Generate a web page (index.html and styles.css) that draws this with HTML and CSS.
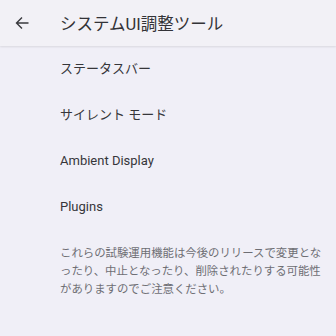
FILE: index.html
```html
<!DOCTYPE html>
<html lang="ja">
<head>
    <meta charset="UTF-8">
    <meta name="viewport" content="width=device-width, initial-scale=1.0">
    <title>システムUI調整ツール</title>
    <link rel="stylesheet" href="styles.css">
</head>
<body>

<div class="app-bar">
    <span class="back">
        <svg width="14" height="14" viewBox="0 0 14 14">
            <path d="M13.5 7H1.5M7 1.5L1.5 7 7 12.5" fill="none" stroke="#3a3a3e" stroke-width="1.4"/>
        </svg>
    </span>
    <h1>システムUI調整ツール</h1>
</div>

<ul class="menu">
    <li>ステータスバー</li>
    <li>サイレント モード</li>
    <li>Ambient Display</li>
    <li>Plugins</li>
</ul>

<p class="note">これらの試験運用機能は今後のリリースで変更となったり、中止となったり、削除されたりする可能性がありますのでご注意ください。</p>

</body>
</html>
```

FILE: styles.css
```css
body {
    font-family: Roboto, "Noto Sans CJK JP", sans-serif;
    background-color: #f0eff7;
    color: #2b2b30;
    margin: 0;
    width: 336px;
    height: 336px;
    overflow: hidden;
}
.app-bar {
    display: flex;
    align-items: center;
    height: 46px;
    background-color: #f2f1f6;
    box-shadow: 0 1px 2px rgba(0, 0, 0, 0.1);
}
.back {
    display: flex;
    width: 14px;
    height: 14px;
    margin-left: 15px;
    margin-right: 31px;
}
h1 {
    margin: 0;
    font-size: 16.5px;
    font-weight: normal;
    color: #333337;
}
.menu {
    list-style: none;
    margin: 0;
    padding: 0;
}
.menu li {
    height: 46px;
    line-height: 46px;
    padding-left: 60px;
    font-size: 13px;
    color: #36363a;
}
.note {
    margin: 14px 0 0;
    padding: 0 12px 0 60px;
    font-size: 11.4px;
    line-height: 18px;
    color: #6e6e74;
}
```
